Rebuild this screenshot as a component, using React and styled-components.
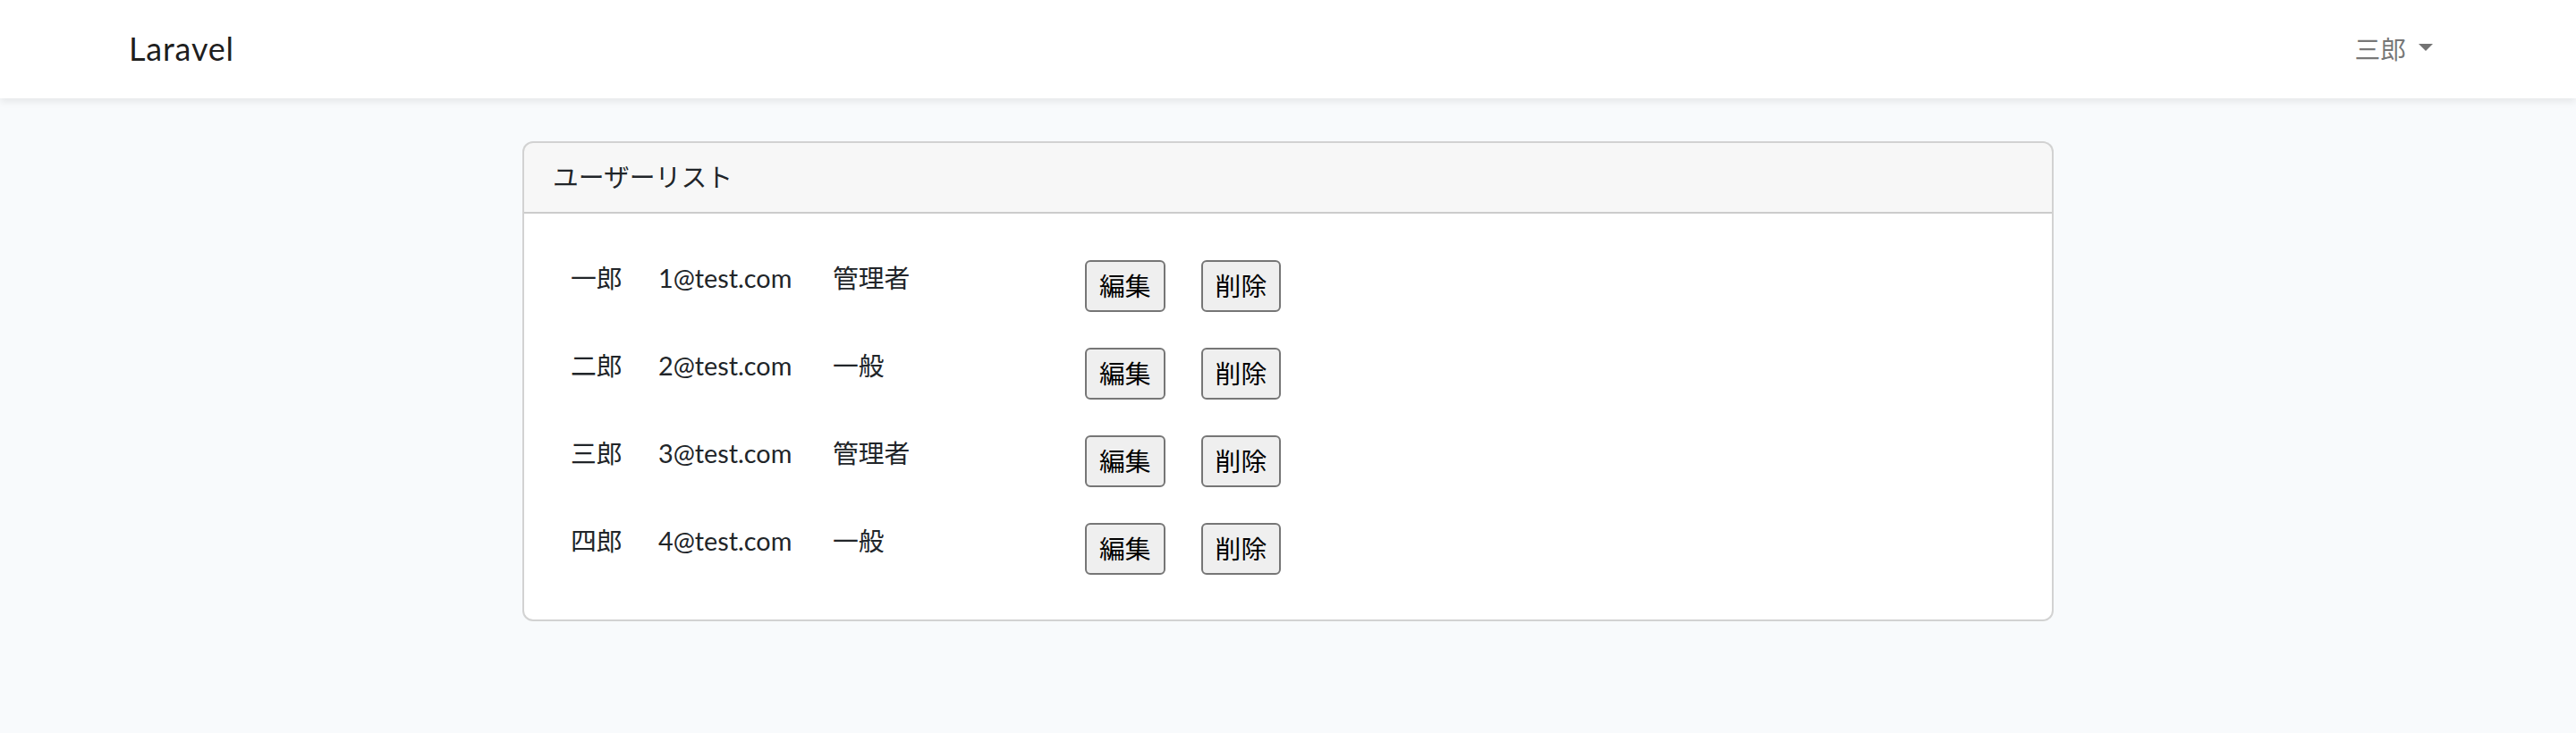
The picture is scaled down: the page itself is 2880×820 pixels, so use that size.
import React from "react";
import styled, { createGlobalStyle } from "styled-components";

const Global = createGlobalStyle`
  * { box-sizing: border-box; }
  html, body { margin: 0; padding: 0; }
  body {
    background: #f8fafc;
    font-family: "Lato", "Noto Sans CJK JP", sans-serif;
    font-size: 28.8px;
    line-height: 46px;
    color: #212529;
  }
`;

const Navbar = styled.nav`
  background: #fff;
  padding: 16px 0;
  box-shadow: 0 4px 8px rgba(0, 0, 0, 0.075);
  position: relative;
`;

const Container = styled.div`
  max-width: 2640px;
  margin: 0 auto;
  padding: 0 24px;
`;

const NavInner = styled(Container)`
  display: flex;
  align-items: center;
  justify-content: space-between;
`;

const Brand = styled.a`
  font-size: 36px;
  line-height: 57.6px;
  letter-spacing: 0.8px;
  padding: 10px 0;
  color: rgba(0, 0, 0, 0.9);
  text-decoration: none;
`;

const NavLink = styled.a`
  display: flex;
  align-items: center;
  padding: 16px 16px;
  color: rgba(0, 0, 0, 0.55);
  text-decoration: none;
`;

const Caret = styled.span`
  display: inline-block;
  margin-left: 14px;
  width: 0;
  height: 0;
  border-top: 8.6px solid rgba(0, 0, 0, 0.55);
  border-left: 8.6px solid transparent;
  border-right: 8.6px solid transparent;
  margin-top: -4px;
`;

const Main = styled.main`
  padding: 48px 0;
`;

const RowCenter = styled.div`
  display: flex;
  justify-content: center;
  margin: 0 -24px;
`;

const Col = styled.div`
  width: 1760px;
  padding: 0 24px;
`;

const Card = styled.div`
  background: #fff;
  border: 2px solid rgba(0, 0, 0, 0.175);
  border-radius: 12px;
`;

const CardHeader = styled.div`
  padding: 15px 32px 16px;
  background: rgba(0, 0, 0, 0.03);
  border-bottom: 2px solid rgba(0, 0, 0, 0.175);
  border-radius: 10px 10px 0 0;
`;

const CardBody = styled.div`
  padding: 32px 32px 30px;
`;

const UserGrid = styled.div`
  display: grid;
  grid-template-columns: 98px 195px 282px auto auto;
  justify-content: start;
`;

const Cell = styled.div`
  padding: 20px 20px;
  white-space: nowrap;
`;

const TextCell = styled(Cell)`
  padding-top: 17px;
`;

const Button = styled.button`
  font: inherit;
  line-height: 46px;
  color: #000;
  background: #efefef;
  border: 2px solid #767676;
  border-radius: 6px;
  padding: 4px 14px;
  margin: 0;
  display: block;
`;

const users = [
  { name: "一郎", email: "1@test.com", role: "管理者" },
  { name: "二郎", email: "2@test.com", role: "一般" },
  { name: "三郎", email: "3@test.com", role: "管理者" },
  { name: "四郎", email: "4@test.com", role: "一般" },
];

export default function App() {
  return (
    <>
      <Global />
      <Navbar>
        <NavInner>
          <Brand href="#">Laravel</Brand>
          <NavLink href="#">
            三郎
            <Caret />
          </NavLink>
        </NavInner>
      </Navbar>
      <Main>
        <Container>
          <RowCenter>
            <Col>
              <Card>
                <CardHeader>ユーザーリスト</CardHeader>
                <CardBody>
                  <UserGrid>
                    {users.map((u) => (
                      <React.Fragment key={u.email}>
                        <TextCell>{u.name}</TextCell>
                        <TextCell>{u.email}</TextCell>
                        <TextCell>{u.role}</TextCell>
                        <Cell>
                          <Button>編集</Button>
                        </Cell>
                        <Cell>
                          <Button>削除</Button>
                        </Cell>
                      </React.Fragment>
                    ))}
                  </UserGrid>
                </CardBody>
              </Card>
            </Col>
          </RowCenter>
        </Container>
      </Main>
    </>
  );
}
